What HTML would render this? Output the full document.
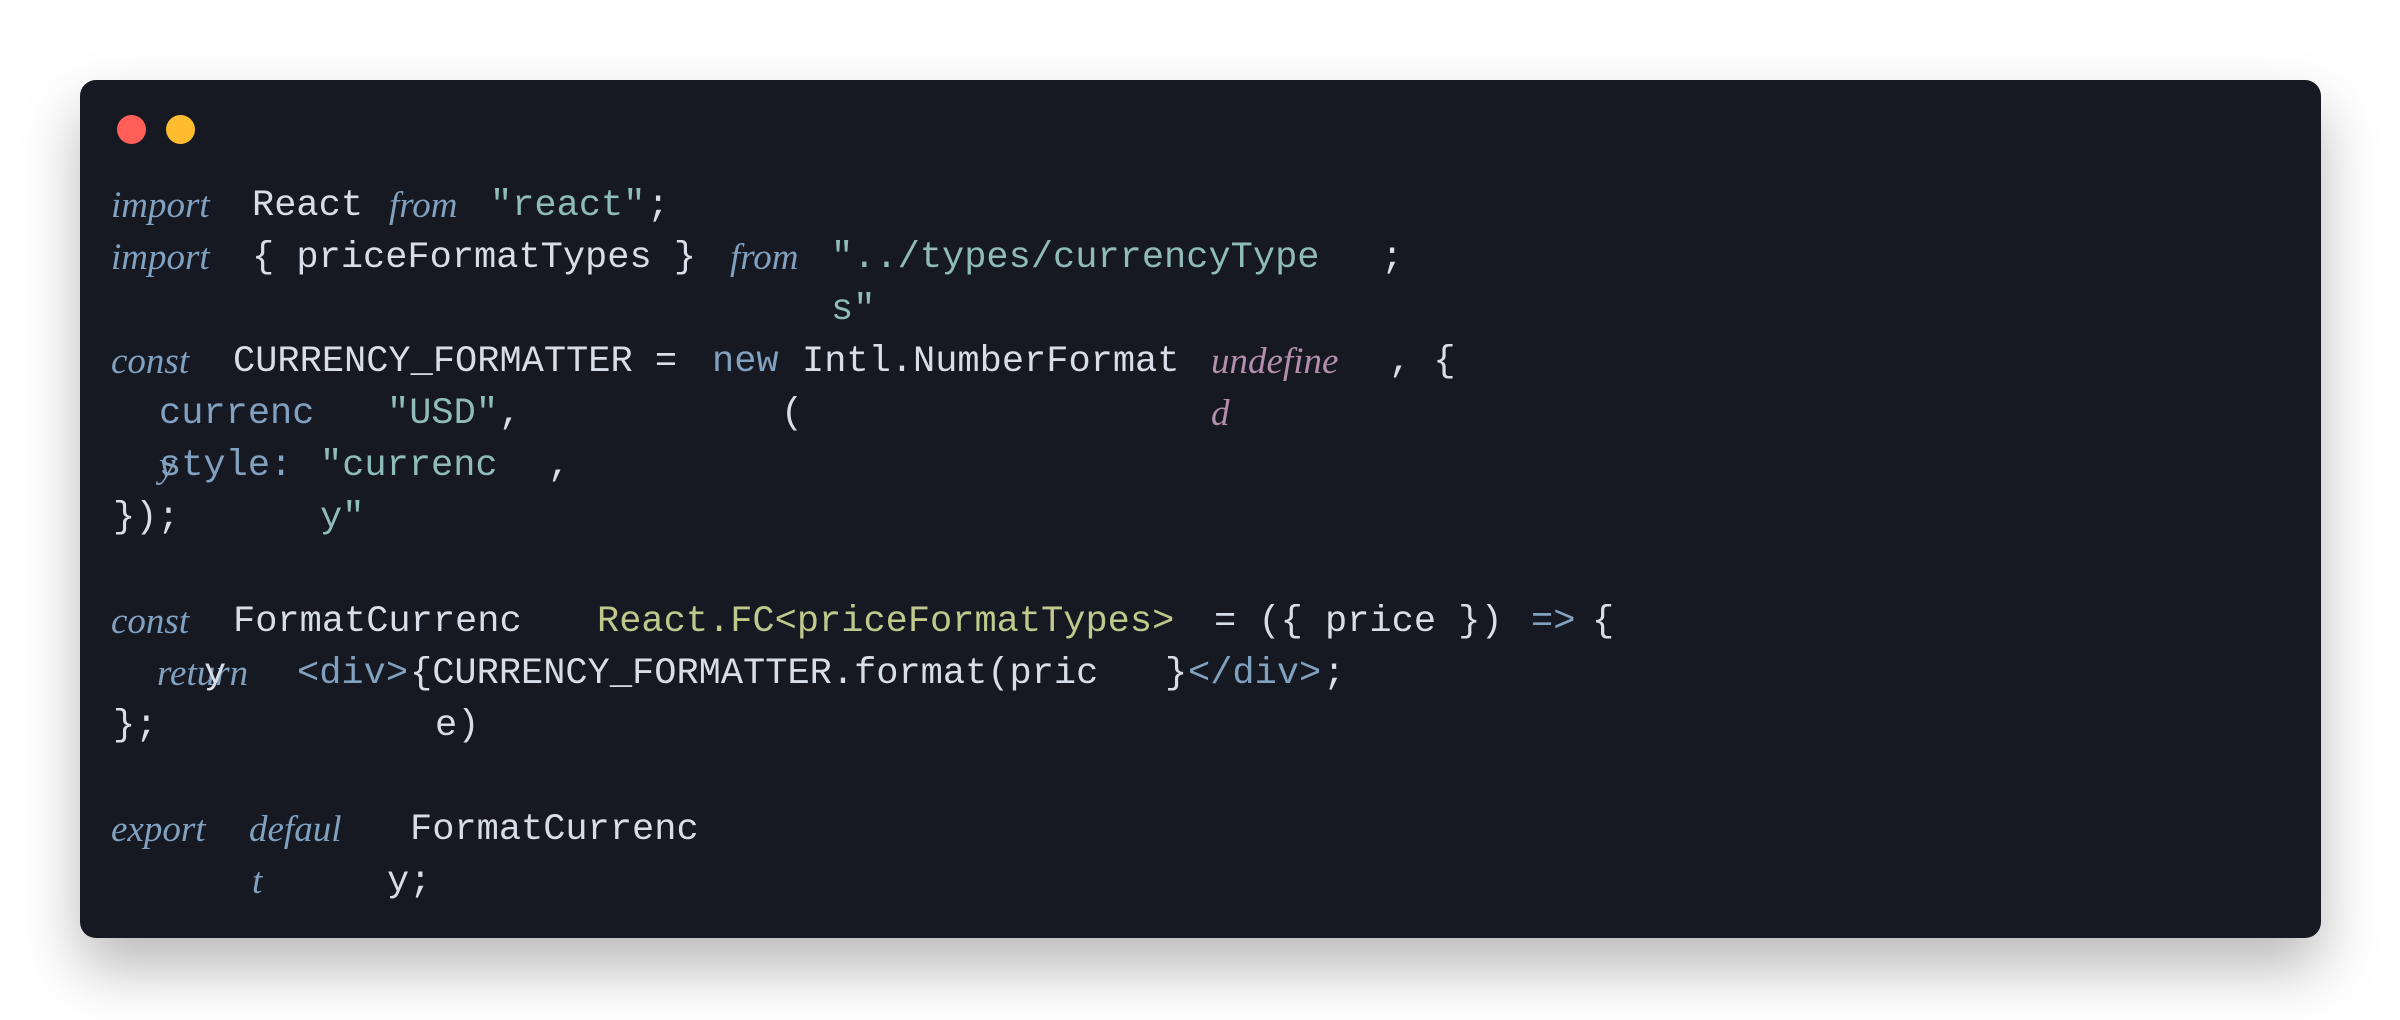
<!DOCTYPE html>
<html><head><meta charset="utf-8"><style>
html,body{margin:0;padding:0;width:2400px;height:1020px;background:#fff;overflow:hidden}
.win{position:absolute;left:80px;top:80px;width:2241px;height:858px;background:#161922;border-radius:16px;box-shadow:0 30px 60px rgba(0,0,0,.28)}
.dot{position:absolute;top:115px;width:29px;height:29px;border-radius:50%}
.l{position:absolute;left:0;width:2400px;height:52px;line-height:52px;font-family:"Liberation Mono",monospace;font-size:37px;color:#d8dee9;white-space:pre}
.l span{position:absolute;top:0}
.k{color:#81a1c1;font-family:"Liberation Serif",serif;font-style:italic;font-size:37px}
.b{color:#81a1c1}
.s{color:#8fbcbb}
.p{color:#b48ead;font-family:"Liberation Serif",serif;font-style:italic;font-size:37px}
.y{color:#c0c88c}
</style></head><body>
<div class="win"></div>
<div class="dot" style="left:117px;background:#ff5f57"></div>
<div class="dot" style="left:166px;background:#febc2e"></div>

<div class="l" style="top:180px"><span class="k" style="left:111px">import</span><span style="left:252px">React</span><span class="k" style="left:389px">from</span><span class="s" style="left:490px">"react"</span><span style="left:647px">;</span></div>
<div class="l" style="top:232px"><span class="k" style="left:111px">import</span><span style="left:252px">{ priceFormatTypes }</span><span class="k" style="left:730px">from</span><span class="s" style="left:831px">"../types/currencyType</span><span style="left:1381px">;</span></div>
<div class="l" style="top:284px"><span class="s" style="left:831px">s"</span></div>
<div class="l" style="top:336px"><span class="k" style="left:111px">const</span><span style="left:233px">CURRENCY_FORMATTER =</span><span class="b" style="left:712px">new</span><span style="left:802px">Intl.NumberFormat</span><span class="p" style="left:1211px">undefine</span><span style="left:1389px">, {</span></div>
<div class="l" style="top:388px"><span class="b" style="left:159px">currenc</span><span class="s" style="left:387px">"USD"</span><span style="left:499px">,</span><span style="left:781px">(</span><span class="p" style="left:1211px">d</span></div>
<div class="l" style="top:440px"><span class="k" style="left:159px">y</span><span class="b" style="left:159px">style:</span><span class="s" style="left:320px">"currenc</span><span style="left:548px">,</span></div>
<div class="l" style="top:492px"><span style="left:113px">});</span><span class="s" style="left:320px">y"</span></div>
<div class="l" style="top:596px"><span class="k" style="left:111px">const</span><span style="left:233px">FormatCurrenc</span><span class="y" style="left:597px">React.FC&lt;priceFormatTypes&gt;</span><span style="left:1214px">= ({ price })</span><span class="b" style="left:1531px">=&gt;</span><span style="left:1592px">{</span></div>
<div class="l" style="top:648px"><span class="k" style="left:157px">return</span><span style="left:204px">y</span><span class="b" style="left:297px">&lt;div&gt;</span><span style="left:410px">{CURRENCY_FORMATTER.format(pric</span><span style="left:1165px">}</span><span class="b" style="left:1188px">&lt;/div&gt;</span><span style="left:1323px">;</span></div>
<div class="l" style="top:700px"><span style="left:113px">};</span><span style="left:435px">e)</span></div>
<div class="l" style="top:804px"><span class="k" style="left:111px">export</span><span class="k" style="left:249px">defaul</span><span style="left:410px">FormatCurrenc</span></div>
<div class="l" style="top:856px"><span class="k" style="left:252px">t</span><span style="left:387px">y;</span></div>
</body></html>
